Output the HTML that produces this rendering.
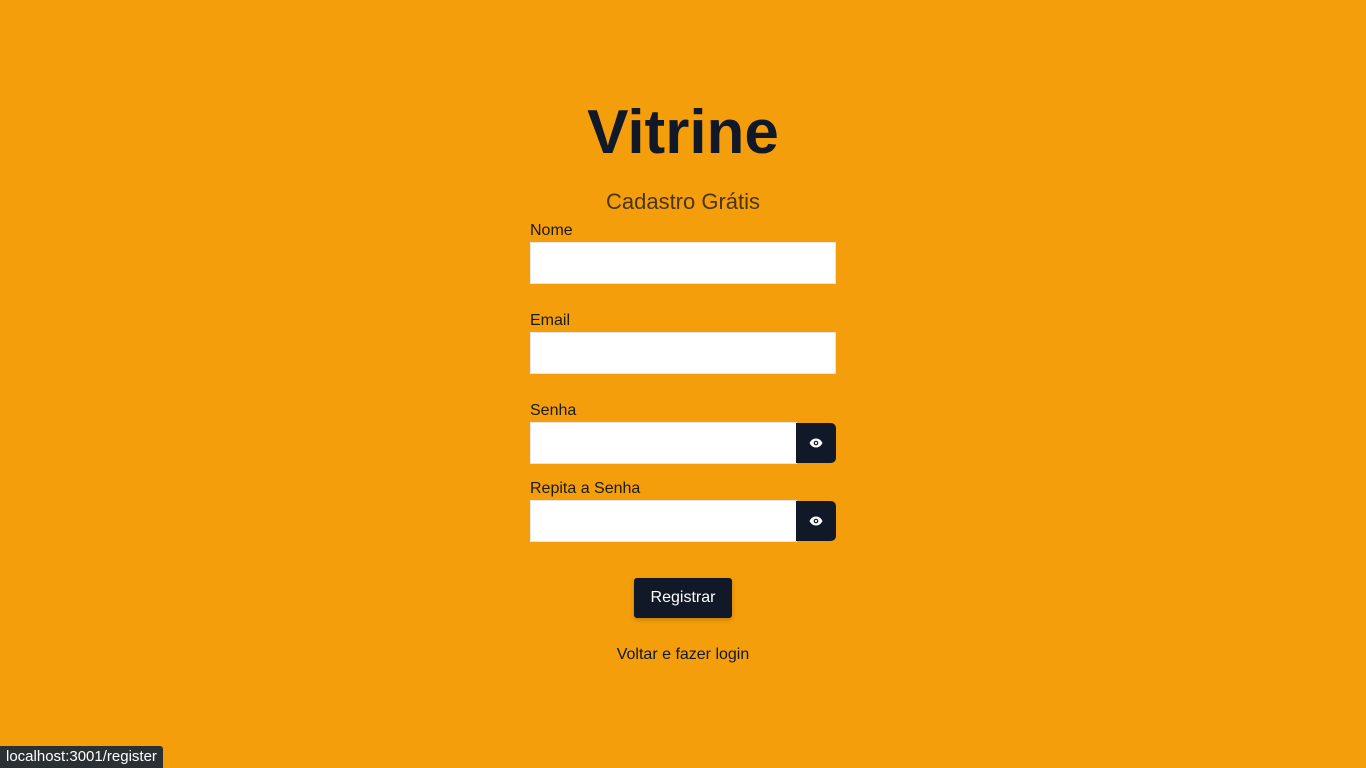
<!DOCTYPE html>
<html><head><meta charset="utf-8"><style>
body{margin:0;width:1366px;height:768px;background:#f49e0c;font-family:"Liberation Sans",sans-serif;color:#111827;position:relative;overflow:hidden}
.a{position:absolute}
h1{position:absolute;left:0;width:1366px;text-align:center;top:93px;margin:0;font-size:62px;font-weight:bold;color:#111827;line-height:80px}
.sub{left:0;width:1366px;text-align:center;top:188px;font-size:22px;font-weight:300;color:#4a3510;line-height:28px}
.lbl{left:530px;font-size:16px;line-height:20px;color:#1a1a1a}
.in{left:530px;width:304px;height:40px;background:#fff;border:1px solid #e5e5e5}
.eye{left:796px;width:40px;height:40px;background:#111827;border-radius:0 5px 5px 0;display:flex;align-items:center;justify-content:center}
.btn{left:634px;top:578px;width:98px;height:40px;background:#111827;color:#fff;border-radius:3px;font-size:16px;display:flex;align-items:center;justify-content:center;box-shadow:0 2px 4px rgba(0,0,0,.2)}
.link{left:0;width:1366px;text-align:center;top:645px;font-size:16px;line-height:20px}
.st{left:0;top:746px;height:22px;padding:0 6px;background:#2b3035;color:#fff;font-size:15px;line-height:22px;border-radius:0 3px 0 0}
</style></head><body>
<h1>Vitrine</h1>
<div class="a sub">Cadastro Grátis</div>
<div class="a lbl" style="top:221px">Nome</div>
<div class="a in" style="top:242px"></div>
<div class="a lbl" style="top:311px">Email</div>
<div class="a in" style="top:332px"></div>
<div class="a lbl" style="top:401px">Senha</div>
<div class="a in" style="top:422px;width:265px"></div>
<div class="a eye" style="top:423px"><svg width="14" height="10" viewBox="0 0 14 10"><path d="M0.5 5C2 2 4.3 0.5 7 0.5S12 2 13.5 5C12 8 9.7 9.5 7 9.5S2 8 0.5 5Z" fill="#fff"/><circle cx="7" cy="5" r="2.3" fill="#111827"/><circle cx="7" cy="5" r="1.1" fill="#fff"/></svg></div>
<div class="a lbl" style="top:479px">Repita a Senha</div>
<div class="a in" style="top:500px;width:265px"></div>
<div class="a eye" style="top:501px"><svg width="14" height="10" viewBox="0 0 14 10"><path d="M0.5 5C2 2 4.3 0.5 7 0.5S12 2 13.5 5C12 8 9.7 9.5 7 9.5S2 8 0.5 5Z" fill="#fff"/><circle cx="7" cy="5" r="2.3" fill="#111827"/><circle cx="7" cy="5" r="1.1" fill="#fff"/></svg></div>
<div class="a btn">Registrar</div>
<div class="a link">Voltar e fazer login</div>
<div class="a st">localhost:3001/register</div>
</body></html>
